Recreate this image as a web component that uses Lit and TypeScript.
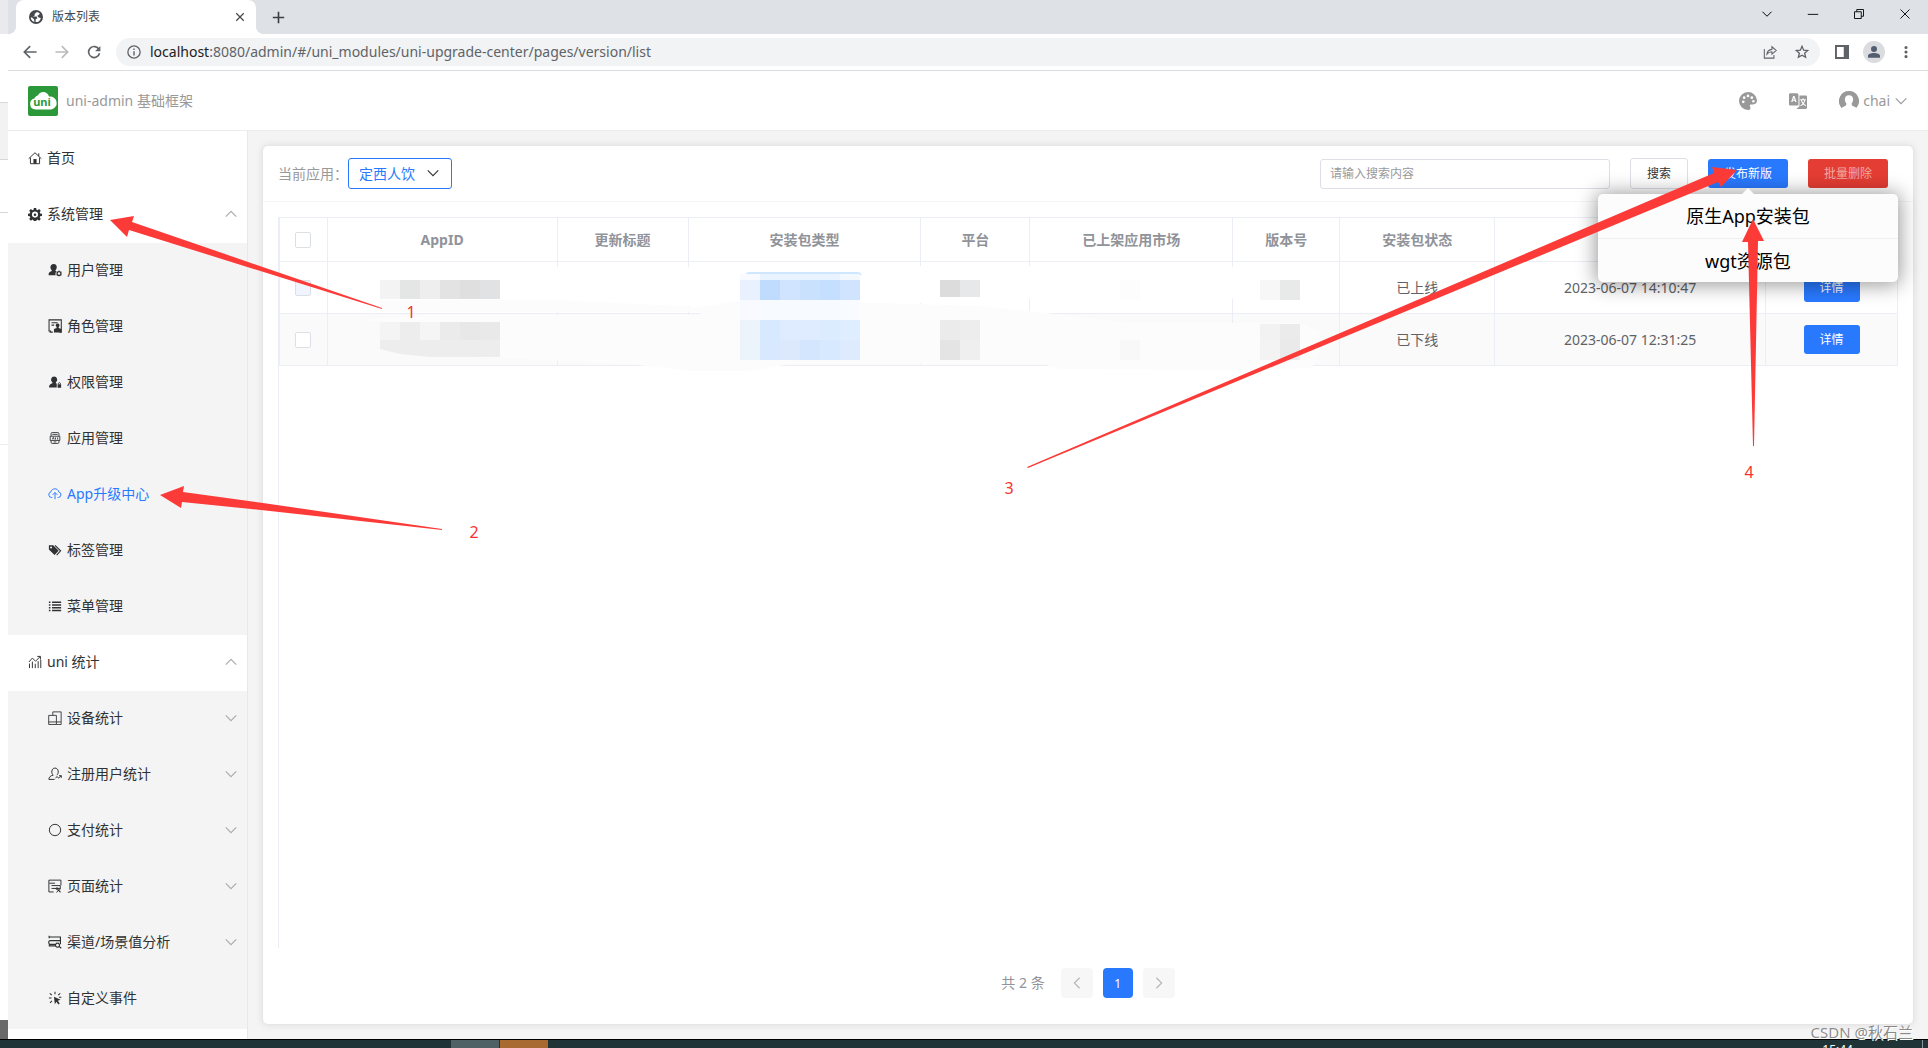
import { LitElement, html, svg, css, nothing } from "lit";
import { customElement, property } from "lit/decorators.js";
import { classMap } from "lit/directives/class-map.js";

const line = (d: string, w = 1) => svg`<path d=${d} fill="none" stroke="currentColor" stroke-width=${w} />`;
const fill = (d: string) => svg`<path d=${d} fill="currentColor" fill-rule="evenodd" />`;

/* All glyphs share a 16 x 16 grid. */
const ICONS: Record<string, unknown> = {
  home: svg`${line("M.8 8.8 8 2l7.200 6.800M2.800 7.500V14.500h10.400v-7M12.300 5.800V2.600", 1.1)}${fill("M6.200 9.200h3.600v5.300H6.200z")}`,
  gear: fill("M6.700 1h2.600l.4 2 1.300.6 1.700-1.200 1.900 1.900-1.200 1.700.5 1.300 2.100.4v2.600l-2.100.4-.5 1.300 1.200 1.700-1.900 1.900-1.700-1.200-1.300.6-.4 2H6.700l-.4-2-1.300-.6-1.700 1.200-1.900-1.900 1.200-1.700-.6-1.300L0 10.300V7.700l2-.4.6-1.300-1.200-1.700 1.900-1.900L5 3.600 6.300 3zM8 5.200a3.500 3.500 0 0 0 0 7 3.500 3.500 0 0 0 0-7zM8 7.300a1.500 1.500 0 1 1 0 3 1.500 1.500 0 0 1 0-3z"),
  user: svg`${fill("M6.500 1.200c2.300 0 3.700 1.700 3.500 3.900-.1 1.400-.7 2.300-1.400 3v.9c.8.200 1 .3 1.300.5-1.200 1-1.700 2.500-1.200 4.500H.7c-.2-2.800.8-4 3.600-5v-.9C3.300 7.400 2.900 6.300 2.800 5c-.1-2.200 1.400-3.800 3.700-3.800z")}<circle cx="12.600" cy="12" r="2.200" fill="none" stroke="currentColor" stroke-width="1.400"/>${line("M12.600 8.600v1M12.600 14.400v1M9.700 10.300l.9.500M14.600 13.200l.9.500M9.700 13.700l.9-.5M14.600 10.800l.9-.5")}`,
  role: svg`${line("M5.500 15H2.500V13.500M1.200 13.500V1h14v14h-2M.5 13.700h3M4 4.200h7M4 7h3", 1.200)}${fill("M11 5.200a2.100 2.100 0 0 1 1.200 3.900v1.200l3 1V15.500H6.800v-4.200l3-1V9.100A2.100 2.100 0 0 1 11 5.200z")}`,
  perm: svg`${fill("M7 1.800a3.500 3.500 0 0 1 2 6.400v1.200l1 .4v4.400H1.200c0-2.500.6-3.600 3.800-4.800V8.200a3.500 3.500 0 0 1 2-6.400zM11 10.500h4v4h-4z")}${line("M11.800 10.600V9.500q1.200-1.600 2.400 0v1.100")}`,
  app: line("M3.500 6V3q0-1.200 1.200-1.200h6.600q1.200 0 1.200 1.200v3M3.500 10.800v2q0 1.400 1.200 1.400h6.600q1.200 0 1.200-1.400v-2M2.500 6h11v4.800h-11zM5 3.900h6M6.500 12.500h3M5 9.500 6 7.200l1 2.300M8.500 9.800V7.300M11 9.800V7.300", 1),
  cloud: svg`${line("M5 12H4.200A3.200 3.200 0 0 1 3.300 5.700C4 .9 11.500.8 12.400 5.700A3.200 3.200 0 0 1 11.800 12H11M8 14V6.500M5.300 9 8 6.300 10.700 9", 1.100)}`,
  tag: svg`${fill("M1 2.500h5l6.200 6.300-4.700 4.900L1 7.400zM3.500 4a1.100 1.100 0 1 0 0 2.200 1.100 1.100 0 0 0 0-2.200z")}${line("M8 2.800l6.400 6.200-4.500 4.800", 1.300)}`,
  list: fill("M1 2.800h1.800v1.700H1zM4.600 2.800H15v1.700H4.600zM1 6h1.800v1.700H1zM4.600 6H15v1.700H4.600zM1 9.200h1.800v1.700H1zM4.600 9.200H15v1.700H4.600zM1 12.400h1.800V14H1zM4.600 12.400H15V14H4.600z"),
  chart: line("M1.700 15V9.800M5 15V7.500M8.300 15v-5M11.600 15V7M14.600 15V5.500M1 8l4-4.500 3.600 3.600L14 1.800M10.600 1.600h3.600v3.600", 1.100),
  device: line("M5.500 5V1h9.500v14.500h-5.500M.8 5h8.800v10.400H.8zM.8 12.500h14", 1),
  member: line("M6 9.300C3.300 7.500 3.800 1.200 8 1.200s4.800 6.100 2 8.100M6 9.300C2.500 10 1 11.800 1 14.200h6.500M8.500 12.500l2-1.600 1.600 1.800 3-2.700M12.600 9.900h2.600v2.500", 1.100),
  ring: svg`<circle cx="8" cy="8" r="6.500" fill="none" stroke="currentColor" stroke-width="1.100"/>`,
  page: line("M6.500 14.800H1V1.300h13.800v6M1.500 4.800H8M4 7.500h10v3.300H4M8.300 10.800 14.600 14.800M14.600 11l-5 4.200M10 9.200l3.600 6", 1.100),
  channel: line("M.8 2.300h13.400v4.200H2.700Q.8 6.500.8 8.600t1.900 2.100h5.500M14.200 6.500v4.200M1.500 10.700v1.800h6.800M1.300.8v3M10.800 9.300a2.300 2.300 0 1 0 .1 0M12.600 13l2.600 2.200", 1.300),
  click: svg`${fill("M6.800 6.500l7.600 3.400-3.200 1.300 2.200 3-1.600 1.200-2.200-3-1.800 2.600z")}${line("M1 8h3M2 2.600l2.400 2.200M8 .8v3M14 2.600l-2.400 2.200M4.500 11.300 2.300 13.500M12.500 7.200H15.300", 1.200)}`,
  up: line("M2 11l6-6 6 6", 1.300),
  down: line("M2 5l6 6 6-6", 1.300),
  left: line("M11 2 5 8l6 6", 1.300),
  right: line("M5 2l6 6-6 6", 1.300),
  back: line("M15.500 8H1.800M8.200 1.300 1.500 8l6.700 6.700", 1.900),
  forward: line("M.5 8h13.700M7.800 1.300 14.500 8l-6.700 6.700", 1.900),
  reload: svg`${line("M13.700 5A6.300 6.300 0 1 0 14.300 9.500", 1.900)}${fill("M15.300 1v6.200H9.200z")}`,
  info: svg`<circle cx="8" cy="8" r="7" fill="none" stroke="currentColor" stroke-width="1.500"/>${fill("M7.200 7h1.600v5H7.200zM7.200 4h1.600v1.700H7.200z")}`,
  share: line("M1.500 4.500V15h11v-3.500M4.500 10.500C5 6.500 7.500 5.200 10.200 5V2l5 4.300-5 4.200V7.800C7.800 7.800 6 8.700 4.500 10.500z", 1.200),
  star: line("M8 1.500l1.900 4.400 4.700.4-3.600 3.100 1.100 4.600L8 11.600 3.900 14 5 9.400 1.400 6.300l4.700-.4z", 1.500),
  panel: fill("M0 0h16v16H0zM2.200 2.200v11.600H10V2.200z"),
  person: fill("M8 0a4 4 0 1 1 0 8 4 4 0 0 1 0-8zM0 15.500V13c0-2.500 4-3.800 8-3.800s8 1.300 8 3.800v2.500z"),
  dots: fill("M8 1a1.800 1.800 0 1 1 0 3.600A1.800 1.800 0 0 1 8 1zM8 6.200a1.800 1.800 0 1 1 0 3.600 1.800 1.800 0 0 1 0-3.600zM8 11.400a1.800 1.800 0 1 1 0 3.600 1.800 1.800 0 0 1 0-3.600z"),
  globe: fill("M8 0a8 8 0 1 1 0 16A8 8 0 0 1 8 0zM9 2.200 6.300 4.500 6.800 6 4.600 7.500h4.200l.8 2-2 1v3.300A6 6 0 0 0 13.500 9L11 8.500 9.500 6.500l2-1L12.300 4A6 6 0 0 0 9 2.200zM2 8.500A6 6 0 0 0 6 13.700V11L3.500 8.500z"),
  close: line("M2 2l12 12M14 2 2 14", 2),
  plus: line("M8 1v14M1 8h14", 2),
  wmin: line("M1 8.500h14", 1.200),
  wmax: line("M2 5h9v9H2zM5 5V2h9v9H11", 1.200),
  wclose: line("M2 2l12 12M14 2l-12 12", 1.200),
  palette: fill("M8 0a8 8 0 0 1 8 7.600c0 2.300-1.500 3.400-3.500 3.400H11c-1.200 0-1.700.9-1.200 1.900.8 1.500.2 3.100-1.800 3.100A8 8 0 0 1 8 0zM3.800 7.500a1.200 1.200 0 1 0 0 2.400 1.200 1.200 0 0 0 0-2.400zM4.600 3.800a1.200 1.200 0 1 0 0 2.400 1.200 1.200 0 0 0 0-2.400zM8 2.300a1.200 1.200 0 1 0 0 2.400 1.200 1.200 0 0 0 0-2.400zM11.400 3.800a1.200 1.200 0 1 0 0 2.400 1.200 1.200 0 0 0 0-2.400zM12.800 7a1.200 1.200 0 1 0 0 2.400 1.200 1.200 0 0 0 0-2.400z"),
  translate: svg`${fill("M1 1.200h6.500l.9 1V12H1Q0 12 0 11V2.200Q0 1.200 1 1.200zM3.700 3.600 1.900 8.800h1.200l.3-1h1.800l.3 1h1.200L4.900 3.600zM4.300 5l.6 1.800H3.700zM9.300 3.200H15q1 0 1 1V14q0 1-1 1H6.500l2.800-2.300z")}<g fill="none" stroke="#fff" stroke-width=".9"><path d="M10 6.800h5M12.500 5.500v1.300M10.300 12.200Q13.600 10.500 14 7M11 7q.5 3.500 4 5.200"/></g>`,
  avatar: svg`<path fill="currentColor" fill-rule="evenodd" d="M8 0a8 8 0 0 1 6 13.300l-3.600-1.800-.4-1.300c2-2.200 2-6.900-2-6.900s-4 4.700-2 6.900l-.4 1.300L2 13.300A8 8 0 0 1 8 0z"/><path d="M2.500 13.200A7.500 7.500 0 0 1 5.200 1.500" fill="none" stroke="currentColor"/>`,
};

@customElement("ui-icon")
export class UiIcon extends LitElement {
  @property() name = "";
  static styles = css`
    :host { display: inline-flex; flex: none; width: 14px; height: 14px; }
    .glyph { width: 100%; height: 100%; display: block; }
  `;
  render() {
    return html`<svg class="glyph" viewBox="0 0 16 16" aria-hidden="true">${ICONS[this.name]}</svg>`;
  }
}

interface Item { label: string; icon: string; arrow?: string; active?: boolean; }

const SYSTEM: Item[] = [
  { label: "用户管理", icon: "user" },
  { label: "角色管理", icon: "role" },
  { label: "权限管理", icon: "perm" },
  { label: "应用管理", icon: "app" },
  { label: "App升级中心", icon: "cloud", active: true },
  { label: "标签管理", icon: "tag" },
  { label: "菜单管理", icon: "list" },
];
const STATS: Item[] = [
  { label: "设备统计", icon: "device", arrow: "down" },
  { label: "注册用户统计", icon: "member", arrow: "down" },
  { label: "支付统计", icon: "ring", arrow: "down" },
  { label: "页面统计", icon: "page", arrow: "down" },
  { label: "渠道/场景值分析", icon: "channel", arrow: "down" },
  { label: "自定义事件", icon: "click" },
];

@customElement("side-menu")
export class SideMenu extends LitElement {
  static styles = css`
    :host { display: block; flex: none; width: 240px; box-sizing: border-box; background: #fff; border-right: 1px solid #e8e8e8; }
    .group { background: #f4f4f4; padding-bottom: 2px; }
    .group.flush { padding-bottom: 0; }
    .item { display: flex; align-items: center; gap: 5px; box-sizing: border-box; width: 100%; height: 56px; padding: 0 9px 2px 20px; border: 0; background: none; font: inherit; color: #303133; text-decoration: none; text-align: left; cursor: pointer; }
    .group .item { padding-left: 40px; }
    .item.active { color: #2979ff; }
    .label { flex: 1; }
    .arrow { color: #aaa; }
  `;
  private row(i: Item) {
    const inner = html`<ui-icon name=${i.icon}></ui-icon><span class="label">${i.label}</span>
      ${i.arrow ? html`<ui-icon class="arrow" name=${i.arrow}></ui-icon>` : nothing}`;
    return i.arrow
      ? html`<button class="item" type="button">${inner}</button>`
      : html`<a class=${classMap({ item: true, active: !!i.active })} href="#">${inner}</a>`;
  }
  render() {
    return html`<nav>
      ${this.row({ label: "首页", icon: "home" })}
      ${this.row({ label: "系统管理", icon: "gear", arrow: "up" })}
      <div class="group flush">${SYSTEM.map((i) => this.row(i))}</div>
      ${this.row({ label: "uni 统计", icon: "chart", arrow: "up" })}
      <div class="group">${STATS.map((i) => this.row(i))}</div>
    </nav>`;
  }
}

const COLUMNS: [string, number][] = [
  ["AppID", 230], ["更新标题", 131], ["安装包类型", 233], ["平台", 109], ["已上架应用市场", 203],
  ["版本号", 107], ["安装包状态", 155], ["上传时间", 271], ["操作", 132],
];
const ROWS = [
  { state: "已上线", time: "2023-06-07 14:10:47", hover: true },
  { state: "已下线", time: "2023-06-07 12:31:25", hover: false },
];

@customElement("version-list")
export class VersionList extends LitElement {
  static styles = css`
    :host { display: flex; flex-direction: column; flex: 1; min-width: 0; box-sizing: border-box; background: #fff; border-radius: 5px; box-shadow: 0 0 6px 1px #dcdcdc; }
    button, input, select { font-family: inherit; }
    .bar { display: flex; align-items: center; height: 55px; padding: 0 25px 0 15px; border-bottom: 1px solid #f5f5f5; color: #999; }
    .pick { display: flex; align-items: center; flex: 1; }
    .drop { position: relative; display: flex; }
    .drop select { appearance: none; width: 104px; height: 31px; padding: 0 10px; border: 1px solid #2979ff; border-radius: 3px; background: #fff; color: #2979ff; font-size: 14px; }
    .drop ui-icon { position: absolute; right: 12px; top: 8px; color: #333; pointer-events: none; }
    .tools { display: flex; align-items: center; gap: 20px; font-size: 12px; }
    .search { box-sizing: border-box; width: 290px; height: 30px; padding: 0 9px; border: 1px solid #dcdfe6; border-radius: 3px; font-size: 12px; color: #333; }
    .search::placeholder { color: #999; opacity: 1; }
    .btn { box-sizing: border-box; height: 29px; padding: 0 16px; border: 0; border-radius: 3px; font-size: 12px; line-height: 29px; color: #fff; white-space: nowrap; cursor: pointer; }
    .plain { height: 31px; background: #fff; border: 1px solid #dcdfe6; color: #333; }
    .primary { background: #2979ff; }
    .warn { background: #e43d33; color: #f3a9a4; }
    .publish { position: relative; }
    .menu { position: absolute; z-index: 5; top: 35px; left: 50%; width: 300px; margin-left: -150px; background: #fcfcfc; border-radius: 5px; box-shadow: 0 1px 20px 2px rgba(0, 0, 0, .4); }
    .menu::before { content: ""; position: absolute; top: -6px; left: 50%; margin-left: -6px; border: 6px solid transparent; border-top: 0; border-bottom-color: #fcfcfc; }
    .choice { display: block; width: 100%; height: 44px; padding: 0 0 2px; border: 0; background: none; font-size: 18px; color: #000; }
    .choice + .choice { border-top: 1px solid #f0f0f0; }
    .wrap { flex: 1; margin: 15px 15px 0; border-left: 1px solid #ebeef5; border-top: 1px solid #ebeef5; }
    table { width: 100%; border-collapse: separate; border-spacing: 0; table-layout: fixed; color: #606266; }
    th, td { box-sizing: border-box; padding: 0; text-align: center; border-right: 1px solid #ebeef5; border-bottom: 1px solid #ebeef5; }
    th:first-child, td:first-child { border-left: 1px solid #ebeef5; }
    th { height: 44px; color: #909399; font-weight: 700; }
    td { height: 52px; }
    .even td { background: #fafafa; }
    .pickcol { width: 48px; }
    .tick { appearance: none; display: block; width: 16px; height: 16px; margin: 0 auto; border: 1px solid #dcdfe6; border-radius: 2px; background: #fff; box-sizing: border-box; }
    .tick.hover { background: #f0f4fe; }
    .detail { padding: 0 16px; }
    .pager { display: flex; align-items: center; justify-content: center; gap: 10px; padding: 20px 0 26px; color: #909399; }
    .total { margin-right: 6px; }
    .step { display: flex; align-items: center; justify-content: center; width: 32px; height: 30px; padding: 0; border: 0; border-radius: 4px; background: #f7f7f7; color: #b5b5b5; }
    .step.on { width: 30px; background: #2979ff; color: #fff; font-size: 12px; }
  `;
  render() {
    const sum = COLUMNS.reduce((a, c) => a + c[1], 0);
    return html`
      <div class="bar">
        <div class="pick">
          <label for="app">当前应用：</label>
          <span class="drop">
            <select id="app"><option>定西人饮</option></select>
            <ui-icon name="down"></ui-icon>
          </span>
        </div>
        <div class="tools">
          <input class="search" type="text" placeholder="请输入搜索内容" aria-label="请输入搜索内容" />
          <button class="btn plain" type="button">搜索</button>
          <div class="publish">
            <button class="btn primary" type="button">发布新版</button>
            <div class="menu">
              <button class="choice" type="button">原生App安装包</button>
              <button class="choice" type="button">wgt资源包</button>
            </div>
          </div>
          <button class="btn warn" type="button">批量删除</button>
        </div>
      </div>
      <div class="wrap">
        <table>
          <colgroup>
            <col class="pickcol" />
            ${COLUMNS.map(([, w]) => html`<col style="width:${(w / sum) * 97}%" />`)}
          </colgroup>
          <thead><tr>
            <th><input class="tick" type="checkbox" aria-label="全选" /></th>
            ${COLUMNS.map(([t]) => html`<th>${t}</th>`)}
          </tr></thead>
          <tbody>
            ${ROWS.map((r, n) => html`<tr class=${n % 2 ? "even" : "odd"}>
              <td><input class=${classMap({ tick: true, hover: r.hover })} type="checkbox" aria-label=${r.time} /></td>
              <td></td><td></td><td></td><td></td><td></td><td></td>
              <td>${r.state}</td><td>${r.time}</td>
              <td><button class="btn primary detail" type="button">详情</button></td>
            </tr>`)}
          </tbody>
        </table>
      </div>
      <div class="pager">
        <span class="total">共 2 条</span>
        <button class="step" type="button" aria-label="上一页"><ui-icon name="left"></ui-icon></button>
        <button class="step on" type="button">1</button>
        <button class="step" type="button" aria-label="下一页"><ui-icon name="right"></ui-icon></button>
      </div>`;
  }
}

/* Pixelated patches: x, y, tile width, height, colours from left to right. */
const MOSAIC: [number, number, number, number, string[]][] = [
  [380, 280, 20, 19, ["#f3f3f3", "#e4e6e5", "#eeeeee", "#e3e3e3", "#dfdfdf", "#e1e2e4"]],
  [380, 322, 20, 18, ["#f4f4f4", "#ededed", "#f5f5f5", "#ebebeb", "#e8e8e8", "#e9e9e9"]],
  [740, 274, 20, 6, ["#f8faff", "#e9f3ff", "#e9f3ff", "#e9f3ff", "#e9f3ff", "#f3f8ff"]],
  [740, 280, 20, 20, ["#e9f1ff", "#bfdcff", "#d0e4ff", "#cae1fd", "#c4dfff", "#d1e4ff"]],
  [740, 300, 20, 20, ["#f8faff", "#f7faff", "#f7faff", "#f7faff", "#f7faff", "#f8fbff"]],
  [740, 320, 20, 20, ["#ecf3fb", "#d6e9ff", "#dfecff", "#dfecff", "#dbecff", "#deedff"]],
  [740, 340, 20, 20, ["#ebf3fb", "#d8e9ff", "#dce9fd", "#d4e6fd", "#d6e9ff", "#deebff"]],
  [940, 280, 20, 17, ["#dcdcdc", "#e7e8ea"]],
  [940, 320, 20, 20, ["#ebebeb", "#ededed"]],
  [940, 340, 20, 20, ["#e4e4e4", "#efefef"]],
  [1120, 280, 20, 20, ["#fdfdfd"]],
  [1120, 340, 20, 20, ["#f8f8f8"]],
  [1260, 280, 20, 20, ["#f7f7f7", "#e8eae9"]],
  [1260, 324, 20, 16, ["#f2f2f2", "#ebebeb"]],
  [1260, 340, 20, 20, ["#f3f3f3", "#eaeaea"]],
];
const ARROWS = [
  "110,220 134,216 132,222 382,308 382,309 129,230 127,237",
  "160,495 184,486 183,492 270,504 442,529 442,530 270,511 182,502 181,508",
  "1737,170 1712,167 1714,173 1027,467 1028,468 1718,182 1721,187",
  "1753,219 1764,241 1758,241 1754,446 1753,446 1748,242 1742,242",
];
const NUMBERS: [string, number, number][] = [["1", 411, 318], ["2", 474, 538], ["3", 1009, 494], ["4", 1749, 478]];

@customElement("mark-layer")
export class MarkLayer extends LitElement {
  static styles = css`
    :host { position: absolute; left: 0; top: 0; z-index: 9; pointer-events: none; }
    .canvas { display: block; }
    .num { font-size: 16px; fill: #f53331; text-anchor: middle; }
    .arrow { fill: #fc3b39; }
  `;
  render() {
    return html`<svg class="canvas" width="1920" height="560">
      <path fill="#fff" d="M400 271L560 267H680L820 273 900 266H1030L1240 267 1320 276V290L1300 299H1030L840 306H690L640 303 555 300 380 300 360 282z"/>
      <path fill="#fcfcfc" d="M380 300H555L700 307 740 301 880 303 980 306 1074 316 1130 323H1300L1320 332V352L1312 368 1240 370 1060 369 1043 364H790L750 371 690 371 630 364 500 358 420 356 385 350V322L360 320 430 314.500H700V312H380z"/>
      <path fill="none" stroke="#cfe6ff" stroke-width="2" d="M746 275Q747 273 749 273H858Q860 273 861 275"/>
      ${MOSAIC.map(([x, y, w, h, cs]) => cs.map((c, i) => svg`<rect x=${x + i * w} y=${y} width=${w} height=${h} fill=${c} />`))}
      <path fill="#ededed" d="M380 340H500V357H430L400 354 380 349z"/>
      ${ARROWS.map((p) => svg`<polygon class="arrow" points=${p} />`)}
      ${NUMBERS.map(([t, x, y]) => svg`<text class="num" x=${x} y=${y}>${t}</text>`)}
    </svg>`;
  }
}

@customElement("app-root")
export class AppRoot extends LitElement {
  static styles = css`
    :host { display: block; font: 14px/20px "Noto Sans", "Noto Sans CJK SC", sans-serif; color: #303133; }
    button { font: inherit; color: inherit; border: 0; padding: 0; background: none; display: flex; align-items: center; justify-content: center; }
    .screen { position: relative; display: flex; flex-direction: column; min-height: 100vh; overflow: hidden; }
    .desk { display: flex; flex: 1; }
    .behind { display: flex; flex-direction: column; width: 8px; background: #fff; }
    .b1 { height: 34px; background: #e8eaed; }
    .b2 { height: 68px; border-bottom: 1px solid #d8d8d8; }
    .b3 { height: 56px; background: #f2f2f2; border-bottom: 1px solid #d8d8d8; }
    .b4 { height: 52px; border-bottom: 1px solid #d8d8d8; }
    .b5 { height: 231px; border-bottom: 1px solid #eee; }
    .b6 { flex: 1; }
    .b7 { height: 19px; background: #696969; }
    .browser { display: flex; flex-direction: column; flex: 1; min-width: 0; background: #fff; }
    .tabs { display: flex; height: 34px; padding-left: 8px; background: #dee1e6; color: #3c4043; }
    .tab { position: relative; display: flex; align-items: center; gap: 9px; box-sizing: border-box; width: 240px; padding: 0 11px 0 13px; border-radius: 8px 8px 0 0; background: #fff; font-size: 12px; color: #45494d; }
    .tab::before, .tab::after { content: ""; position: absolute; bottom: 0; width: 8px; height: 8px; }
    .tab::before { left: -8px; background: radial-gradient(circle at 0 0, transparent 8px, #fff 8px); }
    .tab::after { right: -8px; background: radial-gradient(circle at 100% 0, transparent 8px, #fff 8px); }
    .tabname { flex: 1; }
    .x { width: 10px; height: 10px; }
    .new { width: 44px; }
    .new ui-icon { width: 13px; height: 13px; }
    .controls { display: flex; margin-left: auto; height: 28px; color: #000; }
    .controls button { width: 46px; }
    .controls ui-icon { width: 12px; height: 12px; }
    .address { display: flex; align-items: center; height: 36px; padding: 0 6px; border-bottom: 1px solid #dadce0; color: #5f6368; }
    .address > button { width: 32px; height: 32px; }
    .dim { color: #b9bbbd; }
    .pill { display: flex; align-items: center; gap: 9px; flex: 1; height: 28px; margin: 0 6px; padding: 0 11px; border-radius: 14px; background: #f1f3f4; }
    .url { flex: 1; }
    .host { color: #202124; }
    .pill button { width: 14px; margin-left: 9px; }
    .face { width: 22px; height: 22px; border-radius: 50%; background: #dadce0; display: flex; align-items: center; justify-content: center; color: #525d70; }
    .face ui-icon { width: 12px; height: 12px; }
    .head { display: flex; align-items: center; height: 59px; padding: 0 20px; border-bottom: 1px solid #ececec; color: #999; }
    .logo { width: 30px; height: 30px; margin-right: 8px; }
    .logo text { font: 700 11px "Noto Sans", sans-serif; }
    .title { flex: 1; }
    .big { width: 18px; height: 18px; }
    .acts { display: flex; align-items: center; gap: 32px; }
    .who { gap: 4px; }
    .who .big { width: 20px; height: 20px; }
    .body { display: flex; flex: 1; }
    .main { display: flex; flex: 1; min-width: 0; padding: 15px; background: #f4f4f4; }
    .task { display: flex; position: relative; height: 8px; overflow: hidden; border-top: 1px solid #000; background: #203438; color: #fff; font-size: 12px; }
    .t1 { width: 48px; margin-left: 451px; background: #4f6165; }
    .t2 { width: 48px; margin-left: 1px; background: #a96a32; }
    .clock { margin: 0 69px 0 auto; }
    .edge { width: 1px; background: #8b9799; margin-right: 5px; }
    .mark { position: absolute; z-index: 10; right: 15px; bottom: 6px; font-size: 15px; line-height: 20px; color: rgba(90, 90, 90, .7); text-shadow: 1px 1px 0 #fff; }
  `;
  render() {
    const ic = (n: string, c = "") => html`<ui-icon class=${c} name=${n}></ui-icon>`;
    const b = (n: string, label: string, c = "") => html`<button class=${c} type="button" aria-label=${label}>${ic(n)}</button>`;
    return html`<div class="screen">
      <div class="desk">
        <div class="behind">
          <div class="b1"></div><div class="b2"></div><div class="b3"></div><div class="b4"></div>
          <div class="b5"></div><div class="b6"></div><div class="b7"></div>
        </div>
        <div class="browser">
          <div class="tabs">
            <div class="tab">${ic("globe")}<span class="tabname">版本列表</span><button type="button" aria-label="关闭">${ic("close", "x")}</button></div>
            ${b("plus", "新标签页", "new")}
            <div class="controls">${b("down", "搜索标签页")}${b("wmin", "最小化")}${b("wmax", "还原")}${b("wclose", "关闭窗口")}</div>
          </div>
          <div class="address">
            ${b("back", "后退")}${b("forward", "前进", "dim")}${b("reload", "刷新")}
            <div class="pill">${ic("info")}<span class="url"><span class="host">localhost</span>:8080/admin/#/uni_modules/uni-upgrade-center/pages/version/list</span>${b("share", "分享")}${b("star", "收藏")}</div>
            ${b("panel", "侧边栏")}
            <button type="button" aria-label="个人资料"><span class="face">${ic("person")}</span></button>
            ${b("dots", "菜单")}
          </div>
          <div class="head">
            <svg class="logo" viewBox="0 0 30 30" aria-hidden="true">
              <rect width="30" height="30" rx="2" fill="#2b9939"/>
              <path d="M7.500 23.500a5.600 5.600 0 0 1-1.200-11A5.500 5.500 0 0 1 10 9.300C12.500 4.500 19.500 5 21 10.500a6.500 6.500 0 0 1 2.200 13z" fill="#fff"/>
              <text x="14" y="19.500" text-anchor="middle" fill="#2b9939">uni</text>
            </svg>
            <span class="title">uni-admin 基础框架</span>
            <div class="acts">
              <button type="button" aria-label="主题">${ic("palette", "big")}</button>
              <button type="button" aria-label="语言">${ic("translate", "big")}</button>
              <button class="who" type="button">${ic("avatar", "big")}chai${ic("down")}</button>
            </div>
          </div>
          <div class="body">
            <side-menu></side-menu>
            <div class="main"><version-list></version-list></div>
          </div>
        </div>
      </div>
      <div class="task"><div class="t1"></div><div class="t2"></div><span class="clock">15:44</span><div class="edge"></div></div>
      <div class="mark">CSDN @秋石兰</div>
      <mark-layer></mark-layer>
    </div>`;
  }
}
